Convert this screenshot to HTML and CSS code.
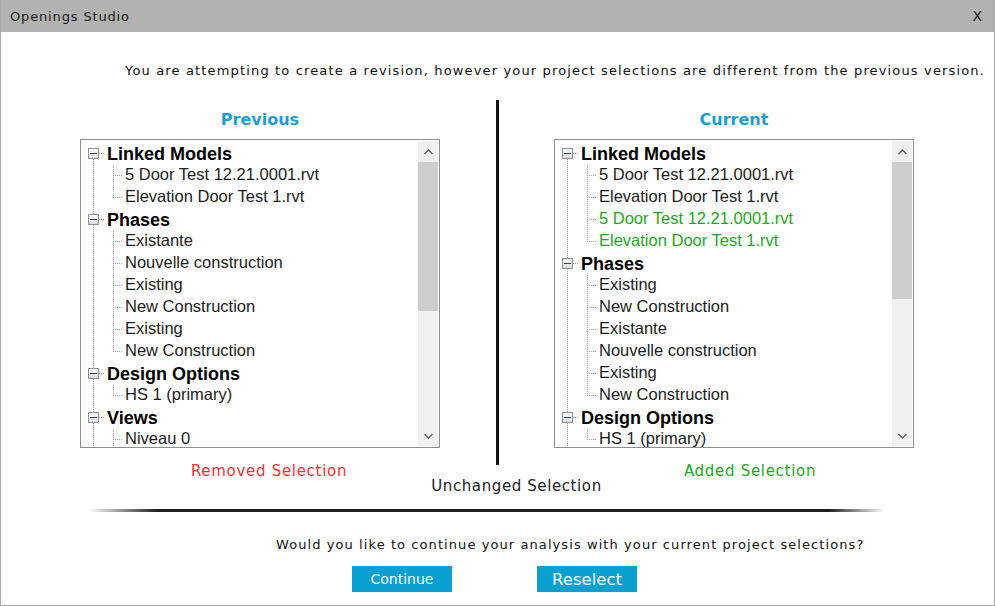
FILE: index.html
```html
<!DOCTYPE html>
<html>
<head>
  <meta charset="utf-8">
  <title>Openings Studio</title>
  <link rel="stylesheet" href="styles.css">
</head>
<body>
  <div class="window">
    <!-- Title bar -->
    <div class="titlebar">
      <span class="title">Openings Studio</span>
      <span class="close">X</span>
    </div>

    <div class="content">
      <p class="message">You are attempting to create a revision, however your project selections are different from the previous version.</p>

      <div class="compare">
        <!-- Previous selections -->
        <div class="side">
          <h2>Previous</h2>
          <div class="tree">
            <div class="list">
              <div class="head"><span class="exp"></span><span class="label">Linked Models</span></div>
              <div class="children">
                <div class="child">5 Door Test 12.21.0001.rvt</div>
                <div class="child last">Elevation Door Test 1.rvt</div>
              </div>
              <div class="head"><span class="exp"></span><span class="label">Phases</span></div>
              <div class="children">
                <div class="child">Existante</div>
                <div class="child">Nouvelle construction</div>
                <div class="child">Existing</div>
                <div class="child">New Construction</div>
                <div class="child">Existing</div>
                <div class="child last">New Construction</div>
              </div>
              <div class="head"><span class="exp"></span><span class="label">Design Options</span></div>
              <div class="children">
                <div class="child last">HS 1 (primary)</div>
              </div>
              <div class="head"><span class="exp"></span><span class="label">Views</span></div>
              <div class="children">
                <div class="child">Niveau 0</div>
              </div>
            </div>
            <div class="scrollbar">
              <div class="arrow"><svg width="9" height="6" viewBox="0 0 9 6"><path d="M0.5 5 L4.5 1 L8.5 5" fill="none" stroke="#606060" stroke-width="1.4"/></svg></div>
              <div class="thumb thumb-prev"></div>
              <div class="track"></div>
              <div class="arrow"><svg width="9" height="6" viewBox="0 0 9 6"><path d="M0.5 1 L4.5 5 L8.5 1" fill="none" stroke="#606060" stroke-width="1.4"/></svg></div>
            </div>
          </div>
          <div class="legend removed">Removed Selection</div>
        </div>

        <div class="divider"></div>

        <!-- Current selections -->
        <div class="side">
          <h2>Current</h2>
          <div class="tree">
            <div class="list">
              <div class="head"><span class="exp"></span><span class="label">Linked Models</span></div>
              <div class="children">
                <div class="child">5 Door Test 12.21.0001.rvt</div>
                <div class="child">Elevation Door Test 1.rvt</div>
                <div class="child added">5 Door Test 12.21.0001.rvt</div>
                <div class="child added last">Elevation Door Test 1.rvt</div>
              </div>
              <div class="head"><span class="exp"></span><span class="label">Phases</span></div>
              <div class="children">
                <div class="child">Existing</div>
                <div class="child">New Construction</div>
                <div class="child">Existante</div>
                <div class="child">Nouvelle construction</div>
                <div class="child">Existing</div>
                <div class="child last">New Construction</div>
              </div>
              <div class="head"><span class="exp"></span><span class="label">Design Options</span></div>
              <div class="children">
                <div class="child last">HS 1 (primary)</div>
              </div>
            </div>
            <div class="scrollbar">
              <div class="arrow"><svg width="9" height="6" viewBox="0 0 9 6"><path d="M0.5 5 L4.5 1 L8.5 5" fill="none" stroke="#606060" stroke-width="1.4"/></svg></div>
              <div class="thumb thumb-cur"></div>
              <div class="track"></div>
              <div class="arrow"><svg width="9" height="6" viewBox="0 0 9 6"><path d="M0.5 1 L4.5 5 L8.5 1" fill="none" stroke="#606060" stroke-width="1.4"/></svg></div>
            </div>
          </div>
          <div class="legend added-label">Added Selection</div>
        </div>
      </div>

      <div class="unchanged">Unchanged Selection</div>
      <div class="rule"></div>

      <p class="question">Would you like to continue your analysis with your current project selections?</p>
      <div class="buttons">
        <button class="btn">Continue</button>
        <button class="btn btn-big">Reselect</button>
      </div>
    </div>
  </div>
</body>
</html>
```

FILE: styles.css
```css
body {
  margin: 0;
  padding: 0;
  background-color: #fff;
  font-family: "DejaVu Sans", Verdana, sans-serif;
}
.window {
  width: 995px;
  height: 606px;
  box-sizing: border-box;
  border: 1px solid #a9a9a9;
  border-top: none;
  overflow: hidden;
  background-color: #fff;
}
.titlebar {
  height: 32px;
  margin: 0 -1px;
  background-color: #b2b2b1;
  display: flex;
  align-items: center;
  justify-content: space-between;
  padding: 0 13px 0 10px;
  font-size: 13px;
  letter-spacing: 0.85px;
  color: #1a1a1a;
}
.close {
  font-size: 14px;
  letter-spacing: 0;
}
.message {
  margin: 0;
  padding: 30px 9px 0 0;
  text-align: right;
  font-size: 13px;
  letter-spacing: 1.15px;
  line-height: 18px;
  color: #111;
}

/* Comparison area */
.compare {
  display: flex;
  margin-top: 20px;
  padding-left: 79px;
}
.side {
  width: 360px;
}
.side h2 {
  margin: 0;
  height: 39px;
  line-height: 39px;
  text-align: center;
  font-size: 16px;
  font-weight: bold;
  color: #1a9fd2;
}
.divider {
  width: 3px;
  height: 365px;
  margin: 0 55px 0 56px;
  background-color: #121212;
}
.tree {
  height: 309px;
  box-sizing: border-box;
  border: 1px solid #8c8e94;
  display: flex;
  overflow: hidden;
}
.list {
  flex: 1;
  padding-top: 3px;
  overflow: hidden;
  background-image: repeating-linear-gradient(to bottom, #a3a3a3 0, #a3a3a3 1px, transparent 1px, transparent 2px);
  background-repeat: no-repeat;
  background-size: 1px 100%;
  background-position: 12px 13px;
}
.head {
  height: 22px;
  display: flex;
  align-items: center;
  padding-left: 7px;
}
.exp {
  width: 11px;
  height: 11px;
  box-sizing: border-box;
  border: 1px solid #919191;
  background: linear-gradient(to bottom, #fff, #dcdcdc);
  position: relative;
  flex: none;
  margin-top: -1px;
}
.exp::before {
  content: "";
  position: absolute;
  left: 1px;
  top: 4px;
  width: 7px;
  height: 1px;
  background-color: #2a3f66;
}
.exp::after {
  content: "";
  position: absolute;
  left: 10px;
  top: 4px;
  width: 6px;
  height: 1px;
  background-image: repeating-linear-gradient(to right, #a3a3a3 0, #a3a3a3 1px, transparent 1px, transparent 2px);
}
.label {
  margin-left: 8px;
  font-family: "Liberation Sans", Arial, sans-serif;
  font-size: 18px;
  font-weight: bold;
  color: #000;
}
.children {
  margin-left: 32px;
}
.child {
  height: 22px;
  line-height: 19px;
  padding-left: 12px;
  font-family: "Liberation Sans", Arial, sans-serif;
  font-size: 16.5px;
  color: #1c1c1c;
  white-space: nowrap;
  background-image:
    repeating-linear-gradient(to bottom, #a3a3a3 0, #a3a3a3 1px, transparent 1px, transparent 2px),
    repeating-linear-gradient(to right, #a3a3a3 0, #a3a3a3 1px, transparent 1px, transparent 2px);
  background-repeat: no-repeat;
  background-size: 1px 100%, 10px 1px;
  background-position: 0 0, 0 10px;
}
.child.last {
  background-size: 1px 11px, 10px 1px;
}
.child.added {
  color: #1daa1d;
}

/* Fake scrollbar */
.scrollbar {
  width: 20px;
  margin: 1px;
  display: flex;
  flex-direction: column;
  background-color: #f0f0f0;
}
.arrow {
  height: 21px;
  display: flex;
  align-items: center;
  justify-content: center;
  flex: none;
}
.thumb {
  background-color: #cdcdcd;
  flex: none;
}
.thumb-prev {
  height: 149px;
}
.thumb-cur {
  height: 137px;
}
.track {
  flex: 1;
}

.legend {
  margin-top: 14px;
  line-height: 18px;
  font-size: 15px;
  letter-spacing: 0.7px;
  text-align: center;
}
.removed {
  padding-left: 18px;
  color: #ef3333;
}
.added-label {
  padding-left: 32px;
  color: #22aa22;
}
.unchanged {
  margin-top: -3px;
  padding-left: 38px;
  line-height: 18px;
  font-size: 15px;
  letter-spacing: 0.6px;
  text-align: center;
  color: #222;
}
.rule {
  width: 797px;
  height: 3px;
  margin: 14px 0 0 87px;
  background: linear-gradient(to right, rgba(20, 20, 20, 0) 0, #1e1e1e 70px, #1e1e1e 740px, rgba(20, 20, 20, 0) 100%);
}
.question {
  margin: 24px 0 0;
  padding-left: 275px;
  font-size: 13px;
  letter-spacing: 1.08px;
  line-height: 18px;
  color: #111;
}
.buttons {
  display: flex;
  gap: 85px;
  margin-top: 12px;
  padding-left: 351px;
}
.btn {
  width: 100px;
  height: 26px;
  padding: 0;
  border: none;
  background-color: #0aa1d1;
  color: #fff;
  font-family: "DejaVu Sans", Verdana, sans-serif;
  font-size: 14px;
  cursor: pointer;
}
.btn-big {
  font-size: 16.5px;
}
```
